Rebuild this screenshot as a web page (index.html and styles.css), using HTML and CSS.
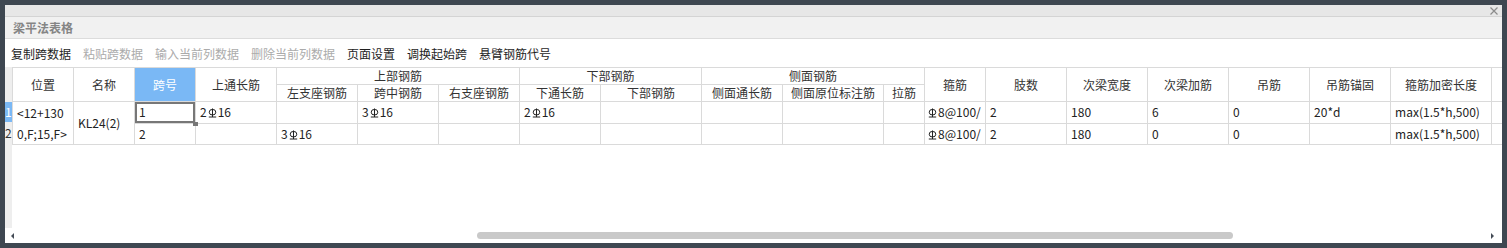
FILE: index.html
```html
<!DOCTYPE html>
<html>
<head>
  <title>梁平法表格</title>
  <meta charset="utf-8">
  <link rel="stylesheet" href="styles.css">
</head>
<body>

  <div class="window">
    <!-- Window title bar with close button -->
    <div class="titlebar">
      <svg class="close" width="8" height="8" viewBox="0 0 8 8">
        <path d="M0.5 0.5 L7.5 7.5 M7.5 0.5 L0.5 7.5" stroke="#8c8c8c" stroke-width="1.2" fill="none"/>
      </svg>
    </div>

    <div class="panel-head">梁平法表格</div>

    <div class="toolbar">
      <span class="tool">复制跨数据</span>
      <span class="tool disabled">粘贴跨数据</span>
      <span class="tool disabled">输入当前列数据</span>
      <span class="tool disabled">删除当前列数据</span>
      <span class="tool">页面设置</span>
      <span class="tool">调换起始跨</span>
      <span class="tool">悬臂钢筋代号</span>
    </div>

    <div class="grid">
      <!-- Row numbers -->
      <div class="row-index">
        <div class="index-head"></div>
        <div class="index-cell current">1</div>
        <div class="index-cell">2</div>
      </div>

      <div class="grid-view">
        <table class="beam-table">
          <colgroup>
            <col style="width: 61px">
            <col style="width: 61px">
            <col style="width: 61px">
            <col style="width: 81px">
            <col style="width: 81px">
            <col style="width: 81px">
            <col style="width: 81px">
            <col style="width: 81px">
            <col style="width: 101px">
            <col style="width: 81px">
            <col style="width: 101px">
            <col style="width: 41px">
            <col style="width: 61px">
            <col style="width: 81px">
            <col style="width: 81px">
            <col style="width: 81px">
            <col style="width: 81px">
            <col style="width: 81px">
            <col style="width: 101px">
            <col style="width: 20px">
          </colgroup>
          <thead>
            <tr>
              <th rowspan="2">位置</th>
              <th rowspan="2">名称</th>
              <th rowspan="2" class="current">跨号</th>
              <th rowspan="2">上通长筋</th>
              <th colspan="3">上部钢筋</th>
              <th colspan="2">下部钢筋</th>
              <th colspan="3">侧面钢筋</th>
              <th rowspan="2">箍筋</th>
              <th rowspan="2">肢数</th>
              <th rowspan="2">次梁宽度</th>
              <th rowspan="2">次梁加筋</th>
              <th rowspan="2">吊筋</th>
              <th rowspan="2">吊筋锚固</th>
              <th rowspan="2">箍筋加密长度</th>
              <th rowspan="2"></th>
            </tr>
            <tr>
              <th>左支座钢筋</th>
              <th>跨中钢筋</th>
              <th>右支座钢筋</th>
              <th>下通长筋</th>
              <th>下部钢筋</th>
              <th>侧面通长筋</th>
              <th>侧面原位标注筋</th>
              <th>拉筋</th>
            </tr>
          </thead>
          <tbody>
            <tr>
              <td rowspan="2" class="wrap">&lt;12+130<br>0,F;15,F&gt;</td>
              <td rowspan="2">KL24(2)</td>
              <td class="active">1</td>
              <td>2<svg class="grade" width="9" height="10" viewBox="0 0 9 10"><ellipse cx="4.5" cy="4.2" rx="3.3" ry="2.8" stroke="#222" fill="none"/><path d="M4.5 0.5 V9 M0.8 9 H8.2" stroke="#222" fill="none"/></svg>16</td>
              <td></td>
              <td>3<svg class="grade" width="9" height="10" viewBox="0 0 9 10"><ellipse cx="4.5" cy="4.2" rx="3.3" ry="2.8" stroke="#222" fill="none"/><path d="M4.5 0.5 V9 M0.8 9 H8.2" stroke="#222" fill="none"/></svg>16</td>
              <td></td>
              <td>2<svg class="grade" width="9" height="10" viewBox="0 0 9 10"><ellipse cx="4.5" cy="4.2" rx="3.3" ry="2.8" stroke="#222" fill="none"/><path d="M4.5 0.5 V9 M0.8 9 H8.2" stroke="#222" fill="none"/></svg>16</td>
              <td></td>
              <td></td>
              <td></td>
              <td></td>
              <td class="tight"><svg class="grade" width="9" height="10" viewBox="0 0 9 10"><ellipse cx="4.5" cy="4.2" rx="3.3" ry="2.8" stroke="#222" fill="none"/><path d="M4.5 0.5 V9 M0.8 9 H8.2" stroke="#222" fill="none"/></svg>8@100/</td>
              <td>2</td>
              <td>180</td>
              <td>6</td>
              <td>0</td>
              <td>20*d</td>
              <td>max(1.5*h,500)</td>
              <td></td>
            </tr>
            <tr>
              <td>2</td>
              <td></td>
              <td>3<svg class="grade" width="9" height="10" viewBox="0 0 9 10"><ellipse cx="4.5" cy="4.2" rx="3.3" ry="2.8" stroke="#222" fill="none"/><path d="M4.5 0.5 V9 M0.8 9 H8.2" stroke="#222" fill="none"/></svg>16</td>
              <td></td>
              <td></td>
              <td></td>
              <td></td>
              <td></td>
              <td></td>
              <td></td>
              <td class="tight"><svg class="grade" width="9" height="10" viewBox="0 0 9 10"><ellipse cx="4.5" cy="4.2" rx="3.3" ry="2.8" stroke="#222" fill="none"/><path d="M4.5 0.5 V9 M0.8 9 H8.2" stroke="#222" fill="none"/></svg>8@100/</td>
              <td>2</td>
              <td>180</td>
              <td>0</td>
              <td>0</td>
              <td></td>
              <td>max(1.5*h,500)</td>
              <td></td>
            </tr>
          </tbody>
        </table>
      </div>
    </div>

    <!-- Horizontal scroll bar -->
    <div class="hscroll">
      <span class="arrow arrow-left"></span>
      <div class="track"><div class="thumb"></div></div>
      <span class="arrow arrow-right"></span>
    </div>
  </div>

</body>
</html>
```

FILE: styles.css
```css
/* General Page Styling */
body {
  font-family: "Noto Sans CJK SC", "Microsoft YaHei", sans-serif;
  font-size: 12px;
  background-color: #3e4751;
  margin: 0;
  padding: 5px;
}

.window {
  height: 238px;
  background-color: #fff;
  display: flex;
  flex-direction: column;
  overflow: hidden;
}

/* Title bar */
.titlebar {
  height: 11px;
  background-color: #e7e7e7;
  border-bottom: 1px solid #d4d4d4;
  display: flex;
  justify-content: flex-end;
  align-items: center;
  padding-right: 4px;
  flex: none;
}

.panel-head {
  height: 21px;
  line-height: 21px;
  background-color: #f1f1f1;
  border-bottom: 1px solid #dcdcdc;
  padding-left: 8px;
  font-weight: bold;
  color: #858585;
  flex: none;
}

/* Toolbar */
.toolbar {
  height: 28px;
  display: flex;
  align-items: center;
  gap: 12px;
  padding-left: 6px;
  color: #1e1e1e;
  flex: none;
}

.tool.disabled {
  color: #ababab;
}

/* Grid */
.grid {
  height: 161px;
  display: flex;
  flex: none;
}

.row-index {
  width: 7px;
  background-color: #eeeeee;
  flex: none;
  overflow: hidden;
}

.index-head {
  height: 35px;
}

.index-cell {
  height: 20px;
  line-height: 20px;
  margin-bottom: 1px;
  color: #333;
  white-space: nowrap;
}

.index-cell.current {
  background-color: #7ab8f5;
  color: #fff;
}

.grid-view {
  flex: 1;
  overflow: hidden;
}

.beam-table {
  border-collapse: collapse;
  table-layout: fixed;
  width: 1499px;
  color: #222;
}

.beam-table th,
.beam-table td {
  border: 1px solid #dadada;
  padding: 0 4px;
  white-space: nowrap;
  overflow: hidden;
}

.beam-table th {
  font-weight: normal;
  color: #333;
  height: 16px;
  line-height: 16px;
  padding: 0;
  text-align: center;
}

.beam-table th.current {
  background-color: #7ab8f5;
  color: #fff;
}

.beam-table td {
  height: 20px;
  line-height: 20px;
  text-align: left;
}

.beam-table td.tight {
  padding: 0 1px 0 2px;
}

.beam-table td.wrap {
  white-space: normal;
  line-height: 21px;
}

.beam-table td.active {
  position: relative;
  box-shadow: inset 0 0 0 2px #777;
  overflow: visible;
}

.beam-table td.active::after {
  content: "";
  position: absolute;
  right: -3px;
  bottom: -3px;
  width: 5px;
  height: 4px;
  background-color: #777;
}

.grade {
  vertical-align: -1px;
  margin: 0 1px;
}

/* Horizontal scroll bar */
.hscroll {
  flex: 1;
  display: flex;
  align-items: center;
  padding: 0 8px 0 6px;
}

.arrow {
  width: 0;
  height: 0;
  border-top: 3px solid transparent;
  border-bottom: 3px solid transparent;
  flex: none;
}

.arrow-left {
  border-right: 3px solid #444c56;
}

.arrow-right {
  border-left: 3px solid #444c56;
}

.track {
  flex: 1;
  height: 7px;
}

.thumb {
  margin-left: 463px;
  width: 756px;
  height: 7px;
  border-radius: 4px;
  background-color: #c9c9c9;
}
```
